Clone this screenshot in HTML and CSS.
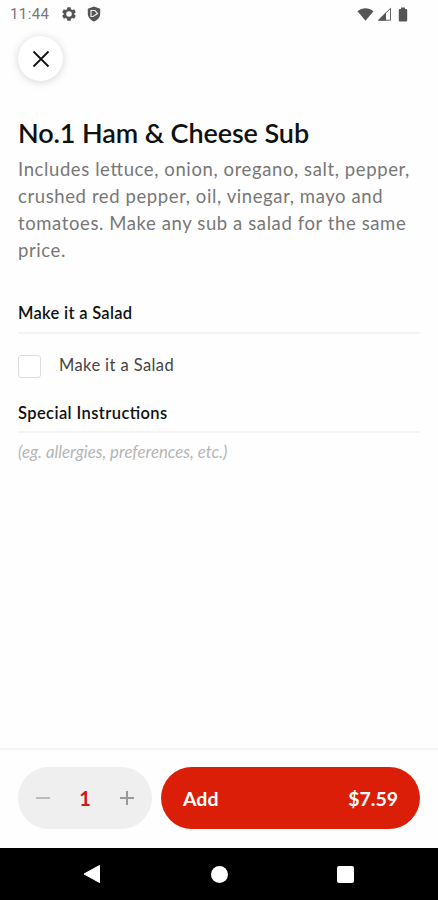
FILE: index.html
```
<!DOCTYPE html>
<html lang="en">
<head>
  <meta charset="UTF-8">
  <meta name="viewport" content="width=device-width, initial-scale=1.0">
  <title>No.1 Ham &amp; Cheese Sub</title>
  <link rel="stylesheet" href="styles.css">
</head>
<body>
  <div class="status-bar">
    <span class="time">11:44</span>
    <svg class="gear" width="16" height="16" viewBox="0 0 24 24"><path fill="#555" fill-rule="evenodd" d="M9.500 2h5l.5 3 2 1.100 2.800-1.100 2.400 4.200-2.300 1.900v1.800l2.300 1.900-2.400 4.200-2.800-1.100-2 1.100-.5 3h-5l-.5-3-2-1.100-2.800 1.100-2.400-4.200 2.300-1.900v-1.800L1.800 9.200 4.200 5 7 6.100 9 5zM12 7.800a4.200 4.200 0 1 0 0 8.400 4.200 4.200 0 0 0 0-8.400z"/></svg>
    <svg class="shield" width="16" height="16" viewBox="0 0 16 16"><path fill="#555" d="M8 .5l6.200 2.300v4.800c0 3.800-2.600 6.600-6.200 8-3.600-1.400-6.200-4.200-6.200-8V2.800z"/><path fill="#555" stroke="#eee" stroke-width="1.200" d="M5 4.500h4l2.500 3L7 10.500H5z"/></svg>
    <div class="signals">
      <svg width="17" height="14" viewBox="0 0 17 14"><path fill="#555" d="M.5 4.200C5 .1 12 .1 16.500 4.200L8.500 13.700z"/></svg>
      <svg width="15" height="14" viewBox="0 0 15 14"><path fill="#fff" stroke="#666" d="M1.500 13.200L13.500 1.300v11.900z"/><path fill="#555" d="M1 13.500L9 5.500v8z"/></svg>
      <svg class="battery" width="10" height="15" viewBox="0 0 10 15"><path fill="#555" d="M3 .5h4V2h1.200q1 0 1 1v10.500q0 1-1 1H1.800q-1 0-1-1V3q0-1 1-1H3z"/></svg>
    </div>
  </div>

  <button class="close-btn" aria-label="Close">
    <svg width="18" height="18" viewBox="0 0 18 18"><path stroke="#111" stroke-width="1.800" d="M1.500 1.500l15 15M16.500 1.500l-15 15"/></svg>
  </button>

  <main class="content">
    <h1>No.1 Ham &amp; Cheese Sub</h1>
    <p class="description">Includes lettuce, onion, oregano, salt, pepper,<br>crushed red pepper, oil, vinegar, mayo and<br>tomatoes. Make any sub a salad for the same<br>price.</p>

    <h2 class="salad-title">Make it a Salad</h2>
    <label class="option">
      <input type="checkbox">
      <span>Make it a Salad</span>
    </label>

    <h2 class="special-title">Special Instructions</h2>
    <input class="instructions" type="text" placeholder="(eg. allergies, preferences, etc.)">
  </main>

  <footer class="order-bar">
    <div class="quantity">
      <button class="minus" aria-label="Remove one"></button>
      <span class="count">1</span>
      <button class="plus" aria-label="Add one"></button>
    </div>
    <button class="add-btn"><span class="add-label">Add</span><span class="price">$7.59</span></button>
  </footer>

  <nav class="nav-bar">
    <svg width="18" height="20" viewBox="0 0 18 20"><path fill="#fff" stroke="#fff" stroke-linejoin="round" d="M1 10L16.500 1.500v17z"/></svg>
    <span class="home"></span>
    <span class="recent"></span>
  </nav>
</body>
</html>
```
FILE: styles.css
```
* {
  box-sizing: border-box;
}

body {
  margin: 0;
  height: 900px;
  display: flex;
  flex-direction: column;
  background: #fefefe;
  font-family: Lato, sans-serif;
  font-feature-settings: "liga" 1;
  color: #111;
  overflow: hidden;
}

button {
  border: none;
  padding: 0;
  font-family: inherit;
  cursor: pointer;
}

svg {
  display: block;
}

.status-bar {
  display: flex;
  align-items: center;
  height: 28px;
  padding: 0 30px 0 10px;
}

.time {
  width: 51px;
  font-family: Roboto, sans-serif;
  font-size: 15px;
  letter-spacing: 0.4px;
  color: #777;
}

.shield {
  margin-left: 9px;
}

.signals {
  display: flex;
  align-items: center;
  gap: 3px;
  margin-left: auto;
}

.battery {
  margin-left: 3px;
}

.close-btn {
  display: flex;
  align-items: center;
  justify-content: center;
  flex-shrink: 0;
  width: 45px;
  height: 45px;
  margin: 8px 0 0 18px;
  border-radius: 50%;
  background: #fff;
  box-shadow: 0 1px 9px rgba(0, 0, 0, 0.17);
}

.content {
  flex: 1;
  padding: 36px 18px 0;
}

h1 {
  margin: 0;
  font-size: 27px;
  font-weight: 600;
  line-height: 32px;
  letter-spacing: -0.1px;
}

.description {
  margin: 7px 0 0;
  font-size: 18.5px;
  line-height: 27px;
  letter-spacing: 0.6px;
  color: #777;
  white-space: nowrap;
}

h2 {
  margin: 0;
  font-size: 16.5px;
  font-weight: 600;
  line-height: 20px;
  letter-spacing: 0.3px;
  border-bottom: 2px solid #f4f4f4;
}

.salad-title {
  height: 31px;
  margin-top: 39px;
}

.option {
  display: flex;
  align-items: center;
  height: 22px;
  margin-top: 21px;
  font-size: 16.5px;
  line-height: 18px;
  letter-spacing: 0.4px;
  color: #444;
}

.option span {
  padding-bottom: 2px;
}

.option input {
  appearance: none;
  width: 23px;
  height: 23px;
  margin: 0 18px 0 0;
  border: 1px solid #ddd;
  border-radius: 3px;
  background: #fff;
}

.special-title {
  height: 30px;
  margin-top: 26px;
  letter-spacing: 0.4px;
}

.instructions {
  display: block;
  width: 100%;
  height: 24px;
  margin-top: 6px;
  padding: 0;
  border: none;
  background: none;
  font: italic 16.8px Lato, sans-serif;
}

.instructions::placeholder {
  color: #b5b5b5;
}

.order-bar {
  display: flex;
  gap: 9px;
  height: 100px;
  padding: 17px 18px 0;
  border-top: 2px solid #f5f5f5;
}

.quantity {
  display: flex;
  align-items: center;
  justify-content: space-between;
  width: 134px;
  height: 62px;
  padding: 0 18px;
  border-radius: 31px;
  background: #efefef;
}

.minus,
.plus {
  width: 14px;
  height: 14px;
  background: linear-gradient(#bbb, #bbb) center / 14px 2px no-repeat;
}

.plus {
  background: linear-gradient(#999, #999) center / 14px 2px no-repeat, linear-gradient(#999, #999) center / 2px 14px no-repeat;
}

.count {
  font-size: 20px;
  font-weight: 700;
  color: #d2161c;
}

.add-btn {
  display: flex;
  flex: 1;
  align-items: center;
  justify-content: space-between;
  height: 62px;
  padding: 0 22px;
  border-radius: 31px;
  background: #da1e07;
  color: #fff;
  font-size: 19.5px;
  font-weight: 700;
}

.nav-bar {
  display: flex;
  align-items: center;
  justify-content: space-between;
  height: 52px;
  padding: 0 84px 0 83px;
  background: #000;
}

.home {
  width: 17px;
  height: 17px;
  border-radius: 50%;
  background: #fff;
}

.recent {
  width: 17px;
  height: 17px;
  border-radius: 2px;
  background: #fff;
}
```
